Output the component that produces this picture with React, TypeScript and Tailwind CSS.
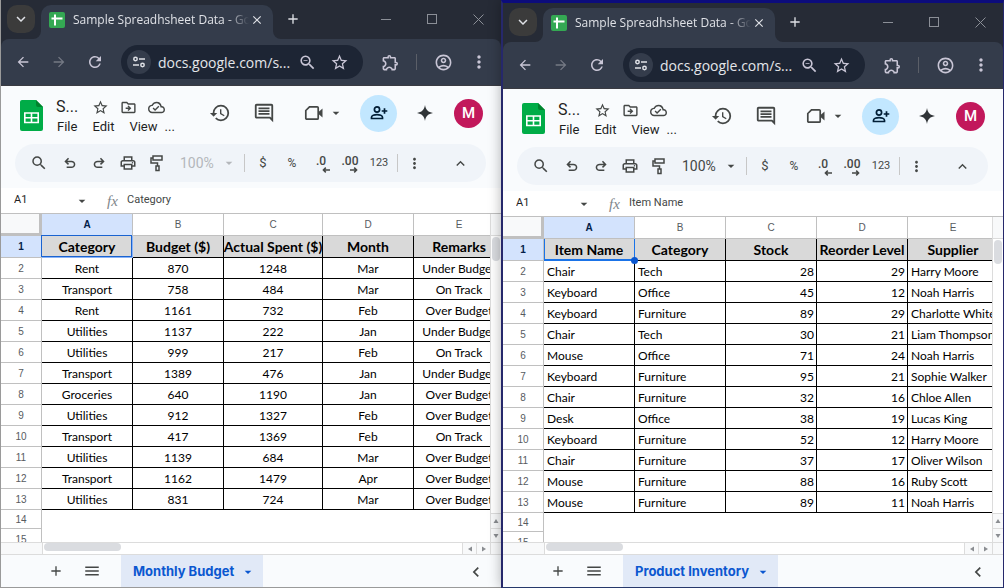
import type { ReactNode } from "react";
import clsx from "clsx";
import {
  MdAdd,
  MdArrowBack,
  MdArrowDropDown,
  MdArrowForward,
  MdClose,
  MdHistory,
  MdKeyboardArrowDown,
  MdKeyboardArrowLeft,
  MdKeyboardArrowUp,
  MdMenu,
  MdMoreVert,
  MdOutlineAccountCircle,
  MdOutlineCloudDone,
  MdOutlineDriveFileMove,
  MdOutlineExtension,
  MdOutlineInsertComment,
  MdOutlinePrint,
  MdRefresh,
  MdSearch,
  MdStarBorder,
  MdZoomOut,
} from "react-icons/md";

type Align = "center" | "left" | "right";

type Column = { title: string; width: string; align: Align };

type Sheet = {
  tab: string;
  active: string;
  zoomDisabled: boolean;
  handle: boolean;
  columns: Column[];
  rows: string[][];
};

const BUDGET: Sheet = {
  tab: "Monthly Budget",
  active: "Category",
  zoomDisabled: true,
  handle: false,
  columns: [
    { title: "Category", width: "w-[91px]", align: "center" },
    { title: "Budget ($)", width: "w-[91px]", align: "center" },
    { title: "Actual Spent ($)", width: "w-[99px]", align: "center" },
    { title: "Month", width: "w-[91px]", align: "center" },
    { title: "Remarks", width: "w-[91px]", align: "center" },
  ],
  rows: [
    ["Rent", "870", "1248", "Mar", "Under Budget"],
    ["Transport", "758", "484", "Mar", "On Track"],
    ["Rent", "1161", "732", "Feb", "Over Budget"],
    ["Utilities", "1137", "222", "Jan", "Under Budget"],
    ["Utilities", "999", "217", "Feb", "On Track"],
    ["Transport", "1389", "476", "Jan", "Under Budget"],
    ["Groceries", "640", "1190", "Jan", "Over Budget"],
    ["Utilities", "912", "1327", "Feb", "Over Budget"],
    ["Transport", "417", "1369", "Feb", "On Track"],
    ["Utilities", "1139", "684", "Mar", "Over Budget"],
    ["Transport", "1162", "1479", "Apr", "Over Budget"],
    ["Utilities", "831", "724", "Mar", "Over Budget"],
  ],
};

const INVENTORY: Sheet = {
  tab: "Product Inventory",
  active: "Item Name",
  zoomDisabled: false,
  handle: true,
  columns: [
    { title: "Item Name", width: "w-[91px]", align: "left" },
    { title: "Category", width: "w-[91px]", align: "left" },
    { title: "Stock", width: "w-[91px]", align: "right" },
    { title: "Reorder Level", width: "w-[91px]", align: "right" },
    { title: "Supplier", width: "w-[91px]", align: "left" },
  ],
  rows: [
    ["Chair", "Tech", "28", "29", "Harry Moore"],
    ["Keyboard", "Office", "45", "12", "Noah Harris"],
    ["Keyboard", "Furniture", "89", "29", "Charlotte White"],
    ["Chair", "Tech", "30", "21", "Liam Thompson"],
    ["Mouse", "Office", "71", "24", "Noah Harris"],
    ["Keyboard", "Furniture", "95", "21", "Sophie Walker"],
    ["Chair", "Furniture", "32", "16", "Chloe Allen"],
    ["Desk", "Office", "38", "19", "Lucas King"],
    ["Keyboard", "Furniture", "52", "12", "Harry Moore"],
    ["Chair", "Furniture", "37", "17", "Oliver Wilson"],
    ["Mouse", "Furniture", "88", "16", "Ruby Scott"],
    ["Mouse", "Furniture", "89", "11", "Noah Harris"],
  ],
};

const ALIGN: Record<Align, string> = {
  center: "text-center",
  left: "text-left pl-[3px]",
  right: "text-right pr-[2px]",
};

function IconButton({ label, className, children }: { label: string; className?: string; children: ReactNode }) {
  return (
    <button aria-label={label} className={clsx("flex shrink-0 items-center justify-center", className)}>
      {children}
    </button>
  );
}

function UndoIcon({ className }: { className?: string }) {
  return (
    <svg viewBox="0 0 24 24" fill="currentColor" className={clsx("size-4", className)}>
      <path d="M7 19.5v-2.2h7.1c1 0 1.900-.3 2.600-.9.7-.7 1-1.400 1-2.400s-.3-1.700-1-2.400c-.7-.6-1.600-.9-2.600-.9H8l2.600 2.600L9 14.900 3.600 9.600 9 4.300l1.600 1.500L8 8.500h6.100c1.600 0 3 .5 4.200 1.600 1.100 1 1.700 2.300 1.700 3.900s-.6 2.900-1.700 3.900c-1.200 1.100-2.600 1.600-4.200 1.600H7z" />
    </svg>
  );
}

function RollerIcon() {
  return (
    <svg viewBox="0 0 16 18" fill="none" stroke="currentColor" strokeWidth="1.500" className="h-[18px] w-4">
      <path d="M4 2h9v4H4zM4 4H2v5h6.500v3" />
      <path d="M7 12h3v4.500H7z" />
    </svg>
  );
}

function TuneIcon() {
  return (
    <svg viewBox="0 0 14 14" fill="none" stroke="currentColor" strokeWidth="1.500" className="size-3.5">
      <circle cx="3.500" cy="4" r="1.700" />
      <circle cx="10.500" cy="10" r="1.700" />
      <path d="M7 4h6M1 10h6" />
    </svg>
  );
}

function VideoIcon() {
  return (
    <svg viewBox="0 0 20 16" className="h-4 w-5">
      <path d="M5.500 1.800h7.700a1 1 0 0 1 1 1v10.400a1 1 0 0 1-1 1H2.800a1 1 0 0 1-1-1V5.500z" fill="none" stroke="currentColor" strokeWidth="1.700" />
      <path d="M14.500 7l4-3.500v9L14.500 9z" fill="currentColor" />
    </svg>
  );
}

function PersonAddIcon() {
  return (
    <svg viewBox="0 0 18 16" fill="none" stroke="currentColor" strokeWidth="1.700" className="h-4 w-[18px]">
      <circle cx="7" cy="4.500" r="2.600" />
      <path d="M1.500 13.500v-1.300c0-1.600 3-2.600 5.500-2.600s5.500 1 5.500 2.600v1.300zM14.500 3.200v5.600M11.700 6h5.600" />
    </svg>
  );
}

function Decimals({ digits, flip }: { digits: string; flip?: boolean }) {
  return (
    <span className="relative -mt-1 font-[Roboto,sans-serif] text-[12px] leading-4 font-medium">
      {digits}
      <svg viewBox="0 0 8 6" className={clsx("absolute -bottom-1 h-1.5 w-2", flip ? "right-0 -scale-x-100" : "-right-1")} fill="none" stroke="currentColor" strokeWidth="1.500">
        <path d="M8 3H1.500M3.800.6L1.400 3l2.400 2.400" />
      </svg>
    </span>
  );
}

function SheetsLogo() {
  return (
    <svg viewBox="0 0 23 31" className="h-[31px] w-[23px] shrink-0">
      <path d="M2 0h14l7 7v22a2 2 0 0 1-2 2H2a2 2 0 0 1-2-2V2a2 2 0 0 1 2-2z" fill="#00ac47" />
      <path d="M16 0l7 7h-5a2 2 0 0 1-2-2z" fill="#00832d" />
      <path d="M4.800 13h13.400v9.500H4.800zM11.500 13v9.500M4.800 17.700h13.400" fill="none" stroke="#fff" strokeWidth="1.600" />
    </svg>
  );
}

function TitleBar() {
  return (
    <div className="flex h-[39px] items-start bg-[#262b36] pt-[5px] pl-1.5 text-[#dfe1e6]">
      <IconButton label="Search tabs" className="size-7 rounded-[10px] bg-[#3b3b3b]">
        <MdKeyboardArrowDown className="size-[18px]" />
      </IconButton>
      <div className="relative ml-1.5 flex h-[34px] w-[232px] shrink-0 items-center rounded-t-[10px] bg-[#343c4b] pr-2 pb-1 pl-2">
        <svg viewBox="0 0 8 8" className="absolute bottom-0 -left-2 size-2" fill="#343c4b">
          <path d="M8 0v8H0a8 8 0 0 0 8-8z" />
        </svg>
        <svg viewBox="0 0 8 8" className="absolute -right-2 bottom-0 size-2" fill="#343c4b">
          <path d="M0 0v8h8a8 8 0 0 1-8-8z" />
        </svg>
        <svg viewBox="0 0 16 16" className="size-4 shrink-0">
          <rect width="16" height="16" rx="2" fill="#34a853" />
          <path d="M6 2.500v11M2.500 6.500h11" stroke="#fff" strokeWidth="2" />
        </svg>
        <span className="ml-2 min-w-0 flex-1 text-[12px] whitespace-nowrap mask-r-from-[154px] mask-r-to-[176px]">
          Sample Spreadhsheet Data - Go
        </span>
        <IconButton label="Close tab" className="size-4">
          <MdClose className="size-3.5" />
        </IconButton>
      </div>
      <IconButton label="New tab" className="ml-1.5 size-7">
        <MdAdd className="size-4" />
      </IconButton>
      <div className="ml-auto flex text-[#8b8f97]">
        <IconButton label="Minimize" className="h-7 w-[46px]">
          <span className="h-px w-2.5 bg-current" />
        </IconButton>
        <IconButton label="Maximize" className="h-7 w-[46px]">
          <span className="size-2.5 border border-current" />
        </IconButton>
        <IconButton label="Close window" className="h-7 w-[46px]">
          <svg viewBox="0 0 11 11" className="size-[11px]" stroke="currentColor">
            <path d="M.5.5l10 10M10.500.5l-10 10" />
          </svg>
        </IconButton>
      </div>
    </div>
  );
}

function AddressBar() {
  return (
    <div className="border-b border-[#3a3b42] bg-[#262b36]">
      <div className="flex h-[46px] items-center rounded-t-lg bg-[#343c4b] pl-1 text-[#c9c6d6]">
        <IconButton label="Back" className="h-8 w-9">
          <MdArrowBack className="size-4" />
        </IconButton>
        <IconButton label="Forward" className="h-8 w-9 text-[#747984]">
          <MdArrowForward className="size-4" />
        </IconButton>
        <IconButton label="Reload" className="h-8 w-9">
          <MdRefresh className="size-[18px]" />
        </IconButton>
        <div className="ml-2 flex h-[34px] min-w-0 flex-1 items-center rounded-full bg-[#1d2534] pr-2 pl-1.5">
          <IconButton label="Site information" className="size-6 rounded-full bg-[#343c4b] text-[#dfe1e6]">
            <TuneIcon />
          </IconButton>
          <input
            aria-label="Address"
            readOnly
            value="docs.google.com/s..."
            className="ml-[7px] w-0 min-w-0 flex-1 bg-transparent text-[14px] text-[#e4e6ea] outline-none"
          />
          <IconButton label="Zoom" className="size-8">
            <MdZoomOut className="size-[19px]" />
          </IconButton>
          <IconButton label="Bookmark" className="size-8">
            <MdStarBorder className="size-[19px]" />
          </IconButton>
        </div>
        <IconButton label="Extensions" className="ml-[9px] h-8 w-9">
          <MdOutlineExtension className="size-[19px]" />
        </IconButton>
        <span className="mx-2 h-4 w-px bg-[#5b5f68]" />
        <IconButton label="Profile" className="h-8 w-9">
          <MdOutlineAccountCircle className="size-[19px]" />
        </IconButton>
        <IconButton label="Browser menu" className="mr-2 ml-1 h-8 w-7">
          <MdMoreVert className="size-5" />
        </IconButton>
      </div>
    </div>
  );
}

function DocHeader() {
  return (
    <header className="flex h-[58px] items-center pr-[18px] pl-[19px] text-[#444746]">
      <SheetsLogo />
      <div className="mt-1 ml-[13px] flex flex-col font-[Roboto,sans-serif] text-[#1f1f1f]">
        <div className="flex h-5 items-center">
          <span className="w-[33px] text-[16px]">S...</span>
          <IconButton label="Star" className="w-[22px] text-[#444746]">
            <MdStarBorder className="size-[17px]" />
          </IconButton>
          <IconButton label="Move" className="ml-1.5 w-[22px] text-[#444746]">
            <MdOutlineDriveFileMove className="size-[17px]" />
          </IconButton>
          <IconButton label="Document status" className="ml-1.5 w-[22px] text-[#444746]">
            <MdOutlineCloudDone className="size-[17px]" />
          </IconButton>
        </div>
        <nav className="flex h-5 items-center gap-[15px] pl-px text-[13px]">
          <button>File</button>
          <button>Edit</button>
          <button>View</button>
          <button className="-ml-2">...</button>
        </nav>
      </div>
      <div className="mb-1 ml-auto flex items-center">
        <IconButton label="Version history" className="w-7">
          <MdHistory className="size-[22px]" />
        </IconButton>
        <IconButton label="Comments" className="ml-4 w-7">
          <MdOutlineInsertComment className="size-[22px]" />
        </IconButton>
        <button aria-label="Join a call" className="ml-[26px] flex items-center gap-1">
          <VideoIcon />
          <MdArrowDropDown className="size-4" />
        </button>
        <IconButton label="Share" className="ml-4 size-[37px] rounded-full bg-[#c2e7ff] text-[#001d35]">
          <PersonAddIcon />
        </IconButton>
        <IconButton label="Gemini" className="ml-[18px] w-5">
          <svg viewBox="0 0 16 16" className="size-4" fill="#303437">
            <path d="M8 0c.8 4.800 3.200 7.200 8 8-4.800.8-7.200 3.200-8 8-.8-4.800-3.200-7.200-8-8 4.800-.8 7.200-3.200 8-8z" />
          </svg>
        </IconButton>
        <IconButton label="Account" className="ml-[19px] size-[29px] rounded-full bg-[#c2185b] font-[Roboto,sans-serif] text-[15px] font-medium text-white">
          M
        </IconButton>
      </div>
    </header>
  );
}

function Toolbar({ zoomDisabled }: { zoomDisabled: boolean }) {
  return (
    <div className="mr-[15px] mb-1.5 ml-3.5 flex h-[38px] items-center gap-px rounded-full bg-[#f0f4f9] pr-3 pl-2 font-[Roboto,sans-serif] text-[12px] text-[#444746]">
      <IconButton label="Search menus" className="h-7 w-8">
        <MdSearch className="size-[18px]" />
      </IconButton>
      <IconButton label="Undo" className="size-7">
        <UndoIcon />
      </IconButton>
      <IconButton label="Redo" className="size-7">
        <UndoIcon className="-scale-x-100" />
      </IconButton>
      <IconButton label="Print" className="size-7">
        <MdOutlinePrint className="size-[18px]" />
      </IconButton>
      <IconButton label="Paint format" className="size-7">
        <RollerIcon />
      </IconButton>
      <button
        disabled={zoomDisabled}
        aria-label="Zoom"
        className="flex w-[68px] shrink-0 items-center justify-between pr-[3px] pl-2 text-[14px] disabled:text-[#b4b7bb]"
      >
        100%
        <MdArrowDropDown className="size-4" />
      </button>
      <span className="mx-[3px] h-[18px] w-px shrink-0 bg-[#c7c7c7]" />
      <button className="size-7 shrink-0 text-[13px]">$</button>
      <button className="size-7 shrink-0">%</button>
      <IconButton label="Decrease decimal places" className="size-7">
        <Decimals digits=".0" />
      </IconButton>
      <IconButton label="Increase decimal places" className="size-7">
        <Decimals digits=".00" flip />
      </IconButton>
      <button className="size-7 shrink-0 text-[11px]">123</button>
      <span className="mx-[3px] h-[18px] w-px shrink-0 bg-[#c7c7c7]" />
      <IconButton label="More" className="h-7 w-6">
        <MdMoreVert className="size-[17px]" />
      </IconButton>
      <IconButton label="Hide the menus" className="ml-auto size-7">
        <MdKeyboardArrowUp className="size-[17px]" />
      </IconButton>
    </div>
  );
}

function FormulaBar({ value, name }: { value: string; name: string }) {
  return (
    <div className="flex h-[26px] items-center border-b border-[#c0c0c0] bg-white pl-[13px] font-[Roboto,sans-serif] text-[11px] text-[#1f1f1f]">
      <input aria-label={`${name} name box`} readOnly value="A1" className="w-[60px] outline-none" />
      <MdArrowDropDown className="size-4 text-[#444746]" />
      <span className="ml-[17px] w-5 font-['Liberation_Serif',serif] text-[15px] leading-4 text-[#80868b] italic">fx</span>
      <input aria-label={`${name} formula`} readOnly value={value} className="min-w-0 flex-1 text-[#444746] outline-none" />
    </div>
  );
}

function RowHead({ n }: { n: number }) {
  return (
    <th
      scope="row"
      className={clsx(
        "border-r border-b border-[#c0c0c0] p-0 pt-px text-center font-['Liberation_Sans',sans-serif] text-[10px]",
        n === 1 ? "bg-[#d3e3fd] font-bold text-[#041e49]" : "font-normal text-[#575b5f]",
      )}
    >
      {n}
    </th>
  );
}

function Grid({ sheet }: { sheet: Sheet }) {
  return (
    <table className="w-0 table-fixed border-separate border-spacing-0 font-[Lato,sans-serif] text-[12px] leading-4 whitespace-nowrap text-black">
      <colgroup>
        <col className="w-[41px]" />
        {sheet.columns.map((c) => (
          <col key={c.title} className={c.width} />
        ))}
      </colgroup>
      <thead className="font-['Liberation_Sans',sans-serif] text-[10px]">
        <tr className="h-[22px]">
          <td className="border-r-[3px] border-b-[3px] border-[#c0c0c0] bg-[#f8f9fa] p-0" />
          {sheet.columns.map((c, i) => (
            <th
              key={c.title}
              scope="col"
              className={clsx(
                "border-r border-b border-[#c0c0c0] p-0",
                i === 0 ? "bg-[#d3e3fd] font-bold text-[#041e49]" : "font-normal text-[#575b5f]",
              )}
            >
              {"ABCDE"[i]}
            </th>
          ))}
        </tr>
      </thead>
      <tbody>
        <tr className="h-[22px]">
          <RowHead n={1} />
          {sheet.columns.map((c, i) => (
            <td key={c.title} className="relative border-r border-b border-black bg-[#d9d9d9] p-0 pt-px text-center text-[14px] font-bold">
              {/* long titles stay on one line and spill evenly */}
              <span className="flex justify-center">{c.title}</span>
              {i === 0 && !sheet.handle && (
                <span className="absolute -top-px right-0 bottom-0 -left-px border border-[#1a63d0] shadow-[1px_1px_0_0_#8ab4f8]" />
              )}
              {i === 0 && sheet.handle && (
                <>
                  <span className="absolute top-0 -right-px -bottom-px left-0 border-x border-b-2 border-[#1a73e8]" />
                  <span className="absolute -right-1 -bottom-1 z-10 size-[7px] rounded-full bg-[#0b57d0]" />
                </>
              )}
            </td>
          ))}
        </tr>
        {sheet.rows.map((row, r) => (
          <tr key={r} className="h-[21px]">
            <RowHead n={r + 2} />
            {row.map((cell, i) => (
              <td key={i} className={clsx("border-r border-b border-black p-0 pt-px", ALIGN[sheet.columns[i].align])}>
                {cell}
              </td>
            ))}
          </tr>
        ))}
        <tr className="h-[19px]">
          <RowHead n={14} />
          <td colSpan={5} />
        </tr>
        <tr className="h-[21px]">
          <RowHead n={15} />
          <td colSpan={5} />
        </tr>
      </tbody>
    </table>
  );
}

function Arrow({ className }: { className?: string }) {
  return (
    <svg viewBox="0 0 6 6" className={clsx("size-1.5", className)} fill="#8a8d91">
      <path d="M3 1l2.500 4h-5z" />
    </svg>
  );
}

function GridArea({ sheet }: { sheet: Sheet }) {
  return (
    <>
      <div className="flex min-h-0 flex-1 bg-white">
        <div className="min-w-0 flex-1 overflow-hidden">
          <Grid sheet={sheet} />
        </div>
        <div className="flex w-[11px] shrink-0 flex-col border-l border-[#dcdcdc]">
          <div className="h-[22px] border-b border-[#dcdcdc] bg-[#f8f9fa]" />
          <div className="mt-px ml-px h-6 w-2 rounded-full bg-[#dadce0]" />
          <button aria-label="Scroll up" className="mt-auto flex h-[15px] items-center justify-center border-t border-[#dcdcdc] bg-[#f8f9fa]">
            <Arrow />
          </button>
          <button aria-label="Scroll down" className="flex h-3.5 items-center justify-center border-t border-[#dcdcdc] bg-[#f8f9fa]">
            <Arrow className="rotate-180" />
          </button>
        </div>
      </div>
      <div className="flex h-3 shrink-0 border-t border-[#dcdcdc] bg-white">
        <div className="w-[42px] border-r border-[#dcdcdc] bg-[#f8f9fa]" />
        <div className="ml-px h-2 w-[77px] rounded-full bg-[#dadce0]" />
        <button aria-label="Scroll left" className="ml-auto flex w-3.5 items-center justify-center border-l border-[#dcdcdc] bg-[#f8f9fa]">
          <Arrow className="-rotate-90" />
        </button>
        <button aria-label="Scroll right" className="flex w-3.5 items-center justify-center border-l border-[#dcdcdc] bg-[#f8f9fa]">
          <Arrow className="rotate-90" />
        </button>
        <div className="w-[11px] border-l border-[#dcdcdc] bg-[#f8f9fa]" />
      </div>
    </>
  );
}

function SheetTabs({ tab }: { tab: string }) {
  return (
    <div className="flex h-[33px] shrink-0 items-center border-t border-[#dcdcdc] bg-[#f9fbfd] pr-[11px] pl-[41px] text-[#444746]">
      <IconButton label="Add sheet" className="size-7">
        <MdAdd className="size-4" />
      </IconButton>
      <IconButton label="All sheets" className="ml-2 size-7">
        <MdMenu className="size-[18px]" />
      </IconButton>
      <button className="ml-[15px] flex h-full items-center gap-1.5 bg-[#e1e9f7] pt-0.5 pr-[7px] pl-3 font-[Inter,sans-serif] text-[13px] font-bold text-[#0b57d0]">
        {tab}
        <MdArrowDropDown className="size-4" />
      </button>
      <IconButton label="Show side panel" className="ml-auto h-full w-7 pt-0.5">
        <MdKeyboardArrowLeft className="size-5" />
      </IconButton>
    </div>
  );
}

function BrowserWindow({ sheet, className }: { sheet: Sheet; className: string }) {
  return (
    <section aria-label={sheet.tab} className={clsx("flex min-w-0 flex-col overflow-hidden", className)}>
      <TitleBar />
      <AddressBar />
      <div className="bg-[#f9fbfd]">
        <DocHeader />
        <Toolbar zoomDisabled={sheet.zoomDisabled} />
      </div>
      <FormulaBar value={sheet.active} name={sheet.tab} />
      <GridArea sheet={sheet} />
      <SheetTabs tab={sheet.tab} />
    </section>
  );
}

export default function App() {
  return (
    <main className="grid h-screen grid-cols-[501fr_503fr] overflow-hidden bg-[#26286b] font-['Open_Sans',sans-serif]">
      <BrowserWindow sheet={BUDGET} className="border-b border-l border-[#9a9a9a]" />
      <BrowserWindow
        sheet={INVENTORY}
        className="relative border-t-[3px] border-r border-b border-l-2 border-t-[#0c0c7c] border-r-[#26286b] border-b-[#26386b] border-l-[#26286b] shadow-[0_0_12px_rgba(0,0,0,0.3)]"
      />
    </main>
  );
}
